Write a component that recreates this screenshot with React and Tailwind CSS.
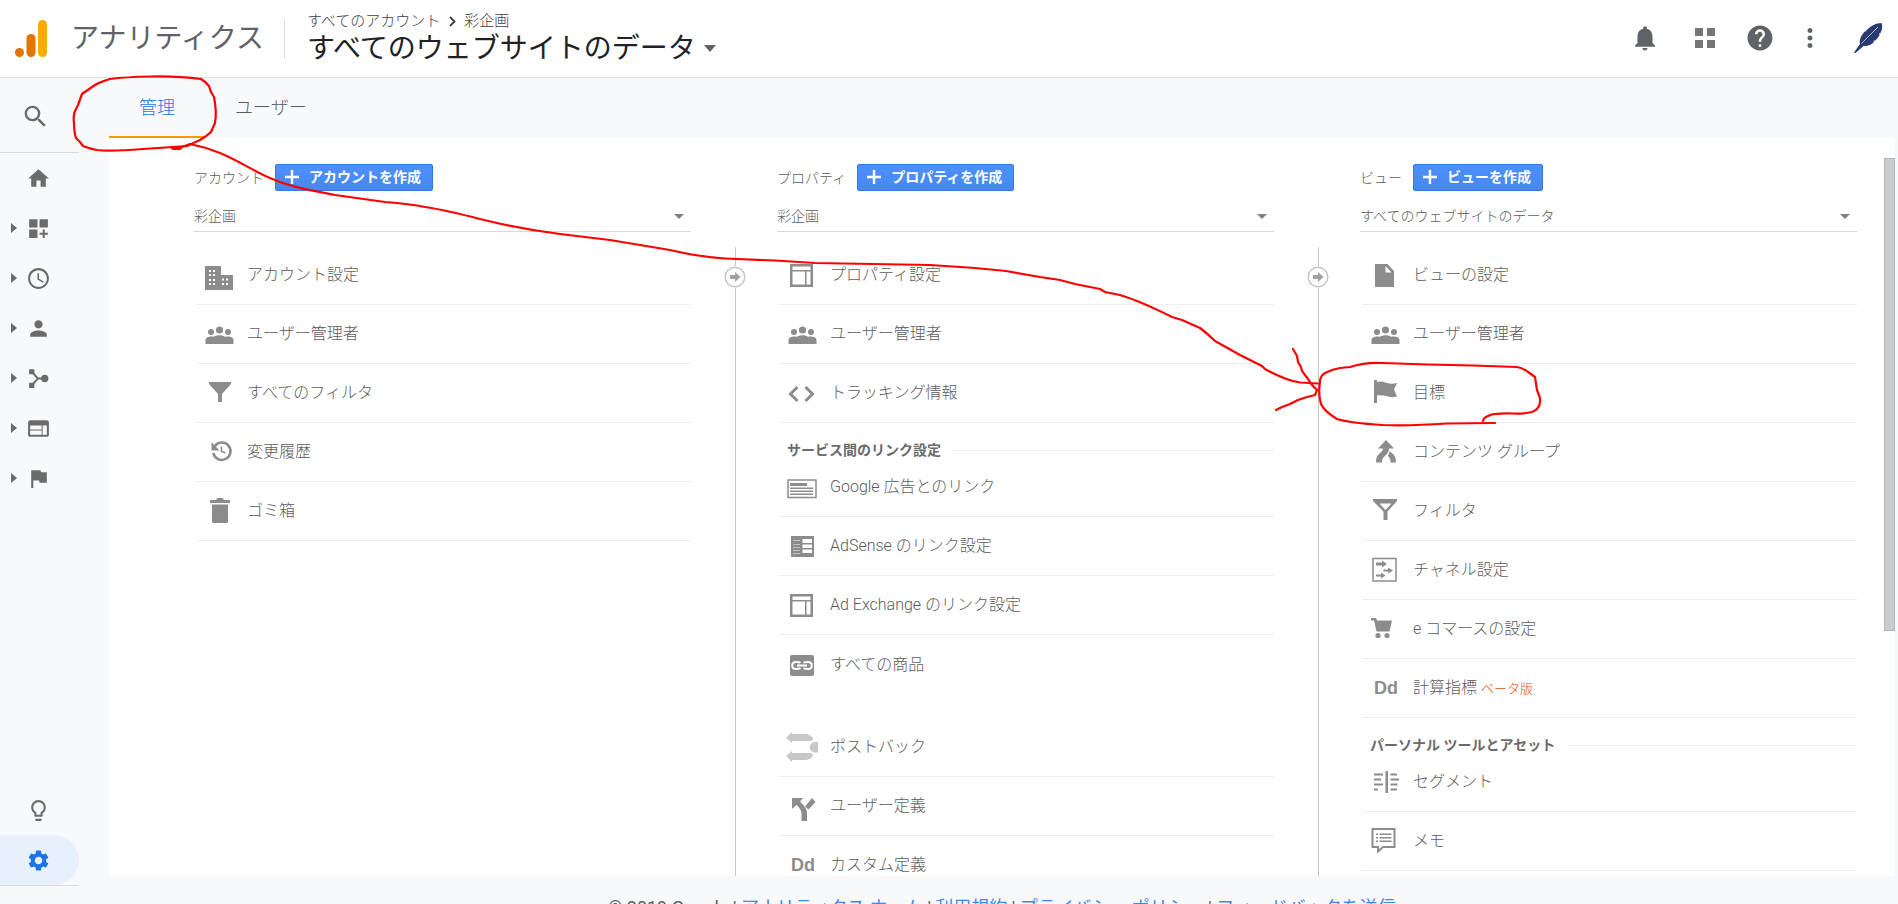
import {
  MdAccessTime,
  MdDashboardCustomize,
  MdFlag,
  MdHelp,
  MdHome,
  MdLightbulbOutline,
  MdMoreVert,
  MdNotifications,
  MdPerson,
  MdSearch,
  MdSettings,
  MdWeb,
} from 'react-icons/md';

/* Menu icons, all drawn on a 28x28 grid */

const LayoutIcon = () => (
  <>
    <path fillRule="evenodd" d="M2 3h23v23H2zM4.500 5.500v18h18v-18z" />
    <path d="M4 9h19v1.500H4zM17 10h1.500v14H17z" />
  </>
);

const icons = {
  building: (
    <>
      <path d="M0 5h16v9h12v15H0z" />
      <path
        fill="none"
        stroke="#fff"
        strokeWidth="2"
        strokeDasharray="2 2"
        d="M4 10h7M4 14h7M4 19h7M4 23h7M17 18.500h7M17 23h7"
      />
    </>
  ),
  users: (
    <>
      <circle cx="14.500" cy="10" r="3.600" />
      <circle cx="6" cy="12" r="3" />
      <circle cx="23" cy="12" r="3" />
      <path d="M.5 24v-4c0-2.500 3-3.500 6-3.500 1 0 1.500 0 2.500.3 3-2 8-2 11 0 1-.3 1.500-.3 2.500-.3 3 0 6 1 6 3.500v4z" />
    </>
  ),
  filter: <path d="M4 3h22v2l-9 10v8h-4v-8L4 5z" />,
  history: (
    <>
      <path fill="none" stroke="currentColor" strokeWidth="2.600" d="M9.500 8.500a8.700 8.700 0 1 1-1.200 6.500" />
      <path d="M6.500 4v8.500h8z" />
      <path fill="none" stroke="currentColor" strokeWidth="1.600" d="M16.500 8.500v5l4 1.200" />
    </>
  ),
  trash: <path d="M5 3h6l1.500-2h5L19 3h6v3H5zM7 7.500h16V24c0 1.500-.5 2-2 2H9c-1.500 0-2-.5-2-2z" />,
  layout: <LayoutIcon />,
  code: <path fill="none" stroke="currentColor" strokeWidth="3" d="M9.500 8 2.500 15l7 7M17.500 8l7 7-7 7" />,
  ads: (
    <>
      <path fill="none" stroke="currentColor" strokeWidth="1.500" d="M0 7h28v17.500H0z" />
      <path d="M2 10h17v3H2zM2 14.500h23v1.500H2zM2 17.500h23V19H2zM2 20.500h23V22H2z" />
    </>
  ),
  adsense: (
    <>
      <path d="M3 4h23v21H3z" />
      <path fill="#fff" d="M14.500 7H24v4h-9.500zM14.500 12.500H24V16h-9.500zM14.500 17.500H24V21h-9.500z" />
      <path stroke="#c4c4c4" d="M5 8.500h7M5 12.500h7M5 15.500h7M5 18.500h7M5 21.500h7" />
    </>
  ),
  link: (
    <>
      <rect x="2" y="4" width="24" height="21" rx="2" />
      <path
        fill="none"
        stroke="#fff"
        strokeWidth="2"
        d="M12.500 11.700C11.500 11 9.500 11 8 11c-2.500 0-3.800 1.500-3.800 3.500S5.500 18 8 18c2 0 3.500 0 4.500-1M15.500 11.700C16.500 11 18.500 11 20 11c2.500 0 3.800 1.500 3.800 3.500S22.500 18 20 18c-2 0-3.500 0-4.500-1M9 14.500h10"
      />
    </>
  ),
  postback: (
    <g fill="#c8c8c8">
      <path d="M-2 5 4-1v2h12c5 0 8 2 9.500 5l-3 2H4v2zM-2 23l6 6v-2h12c5 0 8-2 9.500-5l-3-2H4v-2z" />
      <path d="M30 9v10.500h-3a5.200 5.200 0 0 1 0-10.500z" />
    </g>
  ),
  split: (
    <>
      <path d="M4 6h11l-3 3.500c4 4 7 7 7 12V29h-5.500v-7c0-4-2-6-5-9L4 17z" />
      <path d="m17 14.500 7-8.500 3.500 4-7 7.500z" />
    </>
  ),
  doc: <path fillRule="evenodd" d="M4 3h12.500L23 10v16H4zM14.500 5v6.500h6z" />,
  goal: <path d="M3 1h3v2c3-1 6-.5 9 .8 3.500 1.200 7 1.200 11 .2l-3 6.500 3 7c-4 1-7 .8-11-.5-3-1-6-1-9-.5V24H3z" />,
  merge: (
    <>
      <path d="M15 2l8 8.500h-5c0 3-1.500 5.500-4.500 8-2 1.500-2.500 3-2.500 6H5c0-4 .5-6 3-8.500 2.500-2 4-3.500 4-5.500H7z" />
      <path d="M18.500 13.500c4 2 6.500 5 6.500 11h-5.500c0-3-.5-4.500-2.500-6.500z" />
    </>
  ),
  filterOutline: <path fillRule="evenodd" d="M2 2h24v2l-9.500 10.500V23h-4v-8.500L2 4zM8.500 6.500l6 6.500 6-6.500z" />,
  channel: (
    <>
      <path fill="none" stroke="currentColor" strokeWidth="1.500" d="M2 2.500h23V25H2z" />
      <path d="M5 6.500h6v-2l5 3.500-5 3.500v-2H5zM12.500 13.500H17v-2l5 3-5 3v-2h-4.500zM5 18.500h5v-2l4.500 3-4.500 3v-2H5z" />
    </>
  ),
  cart: (
    <>
      <path d="M0 3h5l1 2.500h15l-2.500 11H5.500L3 5.500H0z" />
      <circle cx="7" cy="20.500" r="2.600" />
      <circle cx="16" cy="20.500" r="2.600" />
    </>
  ),
  segment: (
    <path d="M14.500 3H17v22h-2.500zM3 5.500h9v2H3zM3 10.500h7v2H3zM3 15.500h9v2H3zM3 20.500h4v2H3zM19.500 5.500H26v2h-6.500zM19.500 10.500H28v2h-8.500zM19.500 15.500h7v2h-7zM19.500 20.500H26v2h-6.500z" />
  ),
  memo: (
    <>
      <path fill="none" stroke="currentColor" strokeWidth="2" d="M2 2h21.500v18H12l-5 4.500V20H1.500V2z" />
      <path d="M5 6.500h2v1.500H5zM8.500 6.500h12v1.500h-12zM5 10h2v1.500H5zM8.500 10h12v1.500h-12zM5 13.500h2V15H5zM8.500 13.500h12V15h-12z" />
    </>
  ),
};

const columns = [
  {
    id: 'account',
    label: 'アカウント',
    create: 'アカウントを作成',
    selected: '彩企画',
    groups: [
      {
        items: [
          { icon: 'building', text: 'アカウント設定' },
          { icon: 'users', text: 'ユーザー管理者' },
          { icon: 'filter', text: 'すべてのフィルタ' },
          { icon: 'history', text: '変更履歴' },
          { icon: 'trash', text: 'ゴミ箱' },
        ],
      },
    ],
  },
  {
    id: 'property',
    label: 'プロパティ',
    create: 'プロパティを作成',
    selected: '彩企画',
    groups: [
      {
        items: [
          { icon: 'layout', text: 'プロパティ設定' },
          { icon: 'users', text: 'ユーザー管理者' },
          { icon: 'code', text: 'トラッキング情報' },
        ],
      },
      {
        title: 'サービス間のリンク設定',
        items: [
          { icon: 'ads', text: 'Google 広告とのリンク' },
          { icon: 'adsense', text: 'AdSense のリンク設定' },
          { icon: 'layout', text: 'Ad Exchange のリンク設定' },
          { icon: 'link', text: 'すべての商品', last: true },
        ],
      },
      {
        items: [
          { icon: 'postback', text: 'ポストバック' },
          { icon: 'split', text: 'ユーザー定義' },
          { icon: 'dd', text: 'カスタム定義' },
        ],
      },
    ],
  },
  {
    id: 'view',
    label: 'ビュー',
    create: 'ビューを作成',
    selected: 'すべてのウェブサイトのデータ',
    groups: [
      {
        items: [
          { icon: 'doc', text: 'ビューの設定' },
          { icon: 'users', text: 'ユーザー管理者' },
          { icon: 'goal', text: '目標' },
          { icon: 'merge', text: 'コンテンツ グループ' },
          { icon: 'filterOutline', text: 'フィルタ' },
          { icon: 'channel', text: 'チャネル設定' },
          { icon: 'cart', text: 'e コマースの設定' },
          { icon: 'dd', text: '計算指標', badge: 'ベータ版' },
        ],
      },
      {
        title: 'パーソナル ツールとアセット',
        items: [
          { icon: 'segment', text: 'セグメント' },
          { icon: 'memo', text: 'メモ' },
        ],
      },
    ],
  },
];

function MergeNodesIcon() {
  return (
    <svg viewBox="0 0 24 24" className="size-[25px]" fill="currentColor">
      <path d="M3 3h5v5H3zM3 16h5v5H3z" />
      <circle cx="18" cy="12" r="3.500" />
      <path fill="none" stroke="currentColor" strokeWidth="1.800" d="M6 6l5.500 6L6 18M11.500 12H16" />
    </svg>
  );
}

const navItems = [
  { label: 'ホーム', icon: <MdHome size={25} />, leaf: true },
  { label: 'カスタマイズ', icon: <MdDashboardCustomize size={25} /> },
  { label: 'リアルタイム', icon: <MdAccessTime size={25} /> },
  { label: 'ユーザー', icon: <MdPerson size={25} /> },
  { label: '集客', icon: <MergeNodesIcon /> },
  { label: '行動', icon: <MdWeb size={25} /> },
  { label: 'コンバージョン', icon: <MdFlag size={25} /> },
];

function Header() {
  return (
    <header className="flex h-[78px] shrink-0 items-center border-b border-[#dadce0] bg-white pl-[15px] pr-[15px]">
      <svg viewBox="0 0 32 38" className="h-[38px] w-8 shrink-0">
        <rect x="23" y="0" width="9" height="37" rx="4.500" fill="#f9ab00" />
        <rect x="11.500" y="14" width="9" height="23" rx="4.500" fill="#e37400" />
        <circle cx="4.500" cy="32.500" r="4.500" fill="#e37400" />
      </svg>
      <h1 className="ml-6 text-[28px] leading-10 text-[#5f6368]">アナリティクス</h1>
      <div className="ml-5 h-10 w-px bg-[#dadce0]" />
      <div className="ml-[22px]">
        <nav className="flex items-center gap-[6px] text-[15px] font-light leading-5 text-[#3c4043]">
          <a href="#accounts">すべてのアカウント</a>
          <svg viewBox="0 0 12 12" className="size-3">
            <path fill="none" stroke="#3c4043" strokeWidth="1.800" d="M4 2l4.500 4.500L4 11" />
          </svg>
          <a href="#account">彩企画</a>
        </nav>
        <button className="flex items-center gap-2 text-[28px] leading-9 text-[#202124]">
          すべてのウェブサイトのデータ
          <svg viewBox="0 0 12 7" className="h-[7px] w-3">
            <path fill="#5f6368" d="M0 0h12L6 7z" />
          </svg>
        </button>
      </div>
      <div className="ml-auto flex items-center pb-px text-[#5f6368]">
        <button aria-label="通知">
          <MdNotifications size={30} />
        </button>
        <button aria-label="アプリ" className="ml-[35px]">
          <svg viewBox="0 0 20 20" className="size-5" fill="#757575">
            <path d="M0 0h8v8H0zM12 0h8v8h-8zM0 12h8v8H0zM12 12h8v8h-8z" />
          </svg>
        </button>
        <button aria-label="ヘルプ" className="ml-[30px]">
          <MdHelp size={30} />
        </button>
        <button aria-label="メニュー" className="ml-5">
          <MdMoreVert size={30} />
        </button>
        <button aria-label="プロフィール" className="ml-7">
          <svg viewBox="0 0 30 30" className="size-[30px]">
            <path
              fill="#283a72"
              d="M28.500 0c1.500 3 .5 7-1 10l-1.500.8.600 1.200c-1.500 3-3.500 4.500-4.500 5.500l-1.600.2.500 1.300c-3 3-6 4.300-10.500 4L2.500 30 1 29.500 7 21c-1-4 1-8 3.500-11l.8-1.500 1 .3C17 3 23 0 28.500 0z"
            />
            <path stroke="#d8dcea" strokeWidth=".8" d="M8.500 20.500 25 4" />
          </svg>
        </button>
      </div>
    </header>
  );
}

function Sidebar() {
  return (
    <aside className="flex w-[109px] shrink-0 flex-col pb-[18px] text-[#6b6b6b]">
      <button aria-label="検索" className="flex h-[75px] w-[79px] shrink-0 items-center border-b border-[#dadce0] pl-[21px] pt-[2px]">
        <MdSearch size={29} />
      </button>
      <ul>
        {navItems.map((item) => (
          <li key={item.label}>
            <a href="#nav" aria-label={item.label} className="flex h-[50px] w-[79px] items-center pl-[11px]">
              <svg viewBox="0 0 6 10" className="h-2.5 w-[6px]">
                {!item.leaf && <path fill="currentColor" d="M0 0l6 5-6 5z" />}
              </svg>
              <span className="ml-[9px]">{item.icon}</span>
            </a>
          </li>
        ))}
      </ul>
      <a href="#discover" aria-label="発見" className="mt-auto flex h-[50px] w-[79px] items-center pl-[26px]">
        <MdLightbulbOutline size={25} />
      </a>
      <div className="w-[79px] border-b border-[#dadce0]">
        <a href="#admin" aria-label="管理" className="flex h-[50px] items-center rounded-r-full bg-[#e8f0fe] pl-[26px] text-[#1a73e8]">
          <MdSettings size={25} />
        </a>
      </div>
    </aside>
  );
}

function MenuItem({ item }) {
  return (
    <li className={item.last ? 'mb-6' : ''}>
      <a
        href="#item"
        className={
          item.last
            ? 'flex h-[59px] items-center gap-[14px] pl-[9px]'
            : 'flex h-[59px] items-center gap-[14px] border-b border-[#efefef] pl-[9px]'
        }
      >
        {item.icon === 'dd' ? (
          <span className="w-7 pl-[3px] font-[Liberation_Sans] text-[18px] font-bold text-[#8c8c8c]">Dd</span>
        ) : (
          <svg viewBox="0 0 28 28" className="size-7 shrink-0 overflow-visible text-[#8c8c8c]" fill="currentColor">
            {icons[item.icon]}
          </svg>
        )}
        <span>
          {item.text}
          {item.badge && <span className="ml-1 text-[13px] text-[#d9540b]">{item.badge}</span>}
        </span>
      </a>
    </li>
  );
}

function Column({ column }) {
  return (
    <section className="min-w-0 flex-1 pt-[26px]">
      <div className="flex h-[27px] items-center gap-[11px]">
        <label htmlFor={column.id} className="text-sm">
          {column.label}
        </label>
        <button className="flex h-[27px] items-center gap-[9px] rounded-[2px] border border-[#3079ed] bg-linear-to-b from-[#4d90fe] to-[#4787ed] pb-px pl-2 pr-[11px] text-sm font-bold text-white">
          <svg viewBox="0 0 16 16" className="size-4">
            <path fill="#fff" d="M6.800 1h2.400v5.800H15v2.400H9.200V15H6.800V9.200H1V6.800h5.800z" />
          </svg>
          {column.create}
        </button>
      </div>
      <div className="mt-[10px] flex h-[31px] items-center border-b border-[#d9d9d9]">
        <select id={column.id} className="w-full appearance-none bg-transparent text-sm outline-none">
          <option>{column.selected}</option>
        </select>
        <svg viewBox="0 0 10 5" className="mr-[7px] h-[5px] w-2.5 shrink-0">
          <path fill="#808080" d="M0 0h10L5 5z" />
        </svg>
      </div>
      <div className="ml-[2px] mt-[14px]">
        {column.groups.map((group, i) => (
          <div key={i}>
            {group.title && (
              <h2 className="flex h-[35px] items-center gap-3 pl-2 pt-[19px] text-sm font-bold text-[#6b6b6b]">
                {group.title}
                <span className="h-px flex-1 bg-[#efefef]" />
              </h2>
            )}
            <ul>
              {group.items.map((item) => (
                <MenuItem key={item.text} item={item} />
              ))}
            </ul>
          </div>
        ))}
      </div>
    </section>
  );
}

function Divider() {
  return (
    <div className="flex w-[86px] shrink-0 pl-11 pt-[109px]">
      <div className="relative w-px bg-[#c6c6c6]">
        <button aria-label="移動" className="absolute -left-[11px] top-[19px] rounded-full bg-white">
          <svg viewBox="0 0 22 22" className="size-[22px]">
            <circle cx="11" cy="11" r="9.800" fill="#fff" stroke="#c6c6c6" strokeWidth="1.500" />
            <path fill="#a0a0a0" d="M6 9h5V6l5.500 5-5.500 5v-3H6z" />
          </svg>
        </button>
      </div>
    </div>
  );
}

// Hand-drawn red marks that lead from the admin tab to the goals row
function Annotation() {
  return (
    <svg
      viewBox="0 0 1898 904"
      className="pointer-events-none absolute inset-0 h-full w-full"
      fill="none"
      stroke="#ff0000"
      strokeWidth="2.200"
      strokeLinecap="round"
      strokeLinejoin="round"
    >
      <path d="M201 79Q180 76 150 76.500Q125 77 110 79Q100 82 95 85L82 94L78 105L75 111Q73 116 74 123Q74 132 76 138L80 142L83 146Q90 149 97 150Q110 151.500 143 149L173 147L187 146L200 140Q207 136 211 132L215 123Q217 112 214 97L211 92L209 86Q206 82 201 79" />
      <path strokeWidth="4" d="M173 148h7" />
      <path d="M182 147L190 144Q205 147 220 153C237 160 250 169 270 178C290 187 310 190 335 195L385 202Q410 204 425 207Q445 210 480 219Q520 229 560 234L610 240L670 250Q700 257 725 258.500L775 260.500L815 263L930 265L975 268L1006 271L1040 277L1060 280L1075 284L1100 289L1105 292L1120 295Q1140 301 1172 317L1182 320L1200 328Q1208 334 1215 341L1240 355L1262 366L1265 369Q1285 380 1300 382.500L1318 383.500" />
      <path d="M1293 349L1297 356L1298 362L1301 367L1302 371L1308 379L1312 385L1317 390L1315 395L1307 397L1298 400L1290 404L1282 407L1276 410" />
      <path d="M1495 423L1447 423.500Q1410 426 1383 425Q1350 423 1337 419Q1324 411 1321 404Q1318 394 1320 382Q1320 376 1325 373Q1333 369 1340 368L1350 367Q1365 362 1383 363L1427 364.500L1473 365.500L1517 367Q1523 368 1528 372L1535 377L1537 390L1540 398Q1541 409 1532 412Q1523 414 1513 413.500Q1493 413 1488 416Q1483 418 1483 421" />
    </svg>
  );
}

export default function App() {
  return (
    <div className="relative flex h-screen flex-col overflow-hidden bg-[#f8f9fb] font-[Roboto,'Noto_Sans_CJK_JP',sans-serif] text-base text-[#5c5c5c]">
      <Header />
      <div className="flex min-h-0 flex-1">
        <Sidebar />
        <main className="flex min-w-0 flex-1 flex-col pr-[3px]">
          <nav className="flex h-[60px] shrink-0 text-lg font-light">
            <a href="#admin" className="flex items-center border-b-2 border-[#ff9800] px-[30px] pt-[2px] text-[#1a73e8]">
              管理
            </a>
            <a href="#user" className="flex items-center border-b-2 border-transparent px-[30px] pt-[2px]">
              ユーザー
            </a>
          </nav>
          <div className="flex min-h-0 flex-1 overflow-hidden bg-white pl-[85px] font-light">
            <Column column={columns[0]} />
            <Divider />
            <Column column={columns[1]} />
            <Divider />
            <Column column={columns[2]} />
            <div className="ml-[27px] mt-5 h-[473px] w-[11px] shrink-0 border border-[#b5b5b5] bg-[#cbcbcb]" />
          </div>
          <footer className="flex h-7 shrink-0 justify-center gap-1 overflow-hidden pt-5 text-lg leading-6">
            <span>© 2019 Google</span>
            <span>|</span>
            <a href="#home" className="text-[#4285f4]">アナリティクス ホーム</a>
            <span>|</span>
            <a href="#terms" className="text-[#4285f4]">利用規約</a>
            <span>|</span>
            <a href="#privacy" className="text-[#4285f4]">プライバシー ポリシー</a>
            <span>|</span>
            <a href="#feedback" className="text-[#4285f4]">フィードバックを送信</a>
          </footer>
        </main>
      </div>
      <Annotation />
    </div>
  );
}
